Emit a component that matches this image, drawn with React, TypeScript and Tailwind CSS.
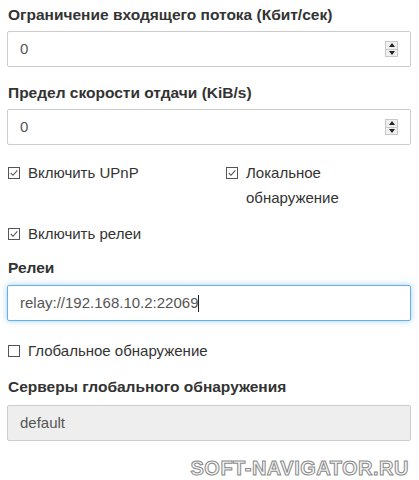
import React from 'react';

const CheckMark: React.FC<{ checked?: boolean }> = ({ checked = false }) => (
  <svg width="12" height="12" viewBox="0 0 12 12" className="shrink-0">
    <rect x="0.5" y="0.5" width="11" height="11" fill="white" stroke="#555" strokeWidth="1" />
    {checked && <path d="M2.8 6 L5 8.3 L9.3 3.3" fill="none" stroke="#555" strokeWidth="1.1" />}
  </svg>
);

const Spinner: React.FC = () => (
  <div className="flex flex-col w-[13px] h-[16px] border border-[#c8c8c8] bg-[#f0f0f0]">
    <div className="flex-1 flex items-center justify-center border-b border-[#c8c8c8]">
      <div className="w-0 h-0 border-l-[3px] border-r-[3px] border-b-[4px] border-l-transparent border-r-transparent border-b-[#222]" />
    </div>
    <div className="flex-1 flex items-center justify-center">
      <div className="w-0 h-0 border-l-[3px] border-r-[3px] border-t-[4px] border-l-transparent border-r-transparent border-t-[#222]" />
    </div>
  </div>
);

const FieldLabel: React.FC<{ children: React.ReactNode }> = ({ children }) => (
  <div className="h-[20px] leading-[20px] pl-px text-[15.5px] font-bold text-[#333]">{children}</div>
);

const NumberInput: React.FC<{ value: string }> = ({ value }) => (
  <div className="mt-[6px] h-[36px] flex items-center justify-between border border-[#ccc] rounded-[2px] bg-white pl-3 pr-[12px]">
    <span className="text-[15px] text-[#555]">{value}</span>
    <Spinner />
  </div>
);

const CheckRow: React.FC<{ checked?: boolean; children: React.ReactNode }> = ({ checked, children }) => (
  <div className="flex items-start gap-[8px] text-[15px] leading-[25px] text-[#333]">
    <div className="h-[25px] flex items-center pl-px">
      <CheckMark checked={checked} />
    </div>
    <span>{children}</span>
  </div>
);

export default function App() {
  return (
    <div
      className="w-[419px] h-[480px] bg-white overflow-hidden pl-[7px] pr-[8px] pt-[5px]"
      style={{ fontFamily: '"Liberation Sans", Arial, sans-serif' }}
    >
      <FieldLabel>Ограничение входящего потока (Кбит/сек)</FieldLabel>
      <NumberInput value="0" />

      <div className="mt-[16px]">
        <FieldLabel>Предел скорости отдачи (KiB/s)</FieldLabel>
        <NumberInput value="0" />
      </div>

      <div className="mt-[15px] grid grid-cols-[218px_1fr]">
        <CheckRow checked>Включить UPnP</CheckRow>
        <div className="w-[120px]">
          <CheckRow checked>Локальное обнаружение</CheckRow>
        </div>
      </div>

      <div className="mt-[11px]">
        <CheckRow checked>Включить релеи</CheckRow>
      </div>

      <div className="mt-[12px]">
        <FieldLabel>Релеи</FieldLabel>
        <div className="mt-[7px] h-[36px] flex items-center border border-[#66afe9] rounded-[2px] bg-white pl-3 shadow-[0_0_6px_rgba(102,175,233,0.6)]">
          <span className="text-[15px] text-[#555]">relay://192.168.10.2:22069</span>
          <span className="w-px h-[17px] bg-[#222]" />
        </div>
      </div>

      <div className="mt-[17px]">
        <CheckRow>Глобальное обнаружение</CheckRow>
      </div>

      <div className="mt-[14px]">
        <FieldLabel>Серверы глобального обнаружения</FieldLabel>
        <div className="mt-[8px] h-[36px] flex items-center border border-[#ccc] rounded-[2px] bg-[#eee] pl-3">
          <span className="text-[15px] text-[#555]">default</span>
        </div>
      </div>

      <div className="mt-[17px] flex justify-end pr-[2px]">
        <span className="text-[20px] font-bold leading-[20px] tracking-[0.5px] text-[#f6f6f6] [-webkit-text-stroke:1px_#8a8a8a]">
          SOFT-NAVIGATOR.RU
        </span>
      </div>
    </div>
  );
}
